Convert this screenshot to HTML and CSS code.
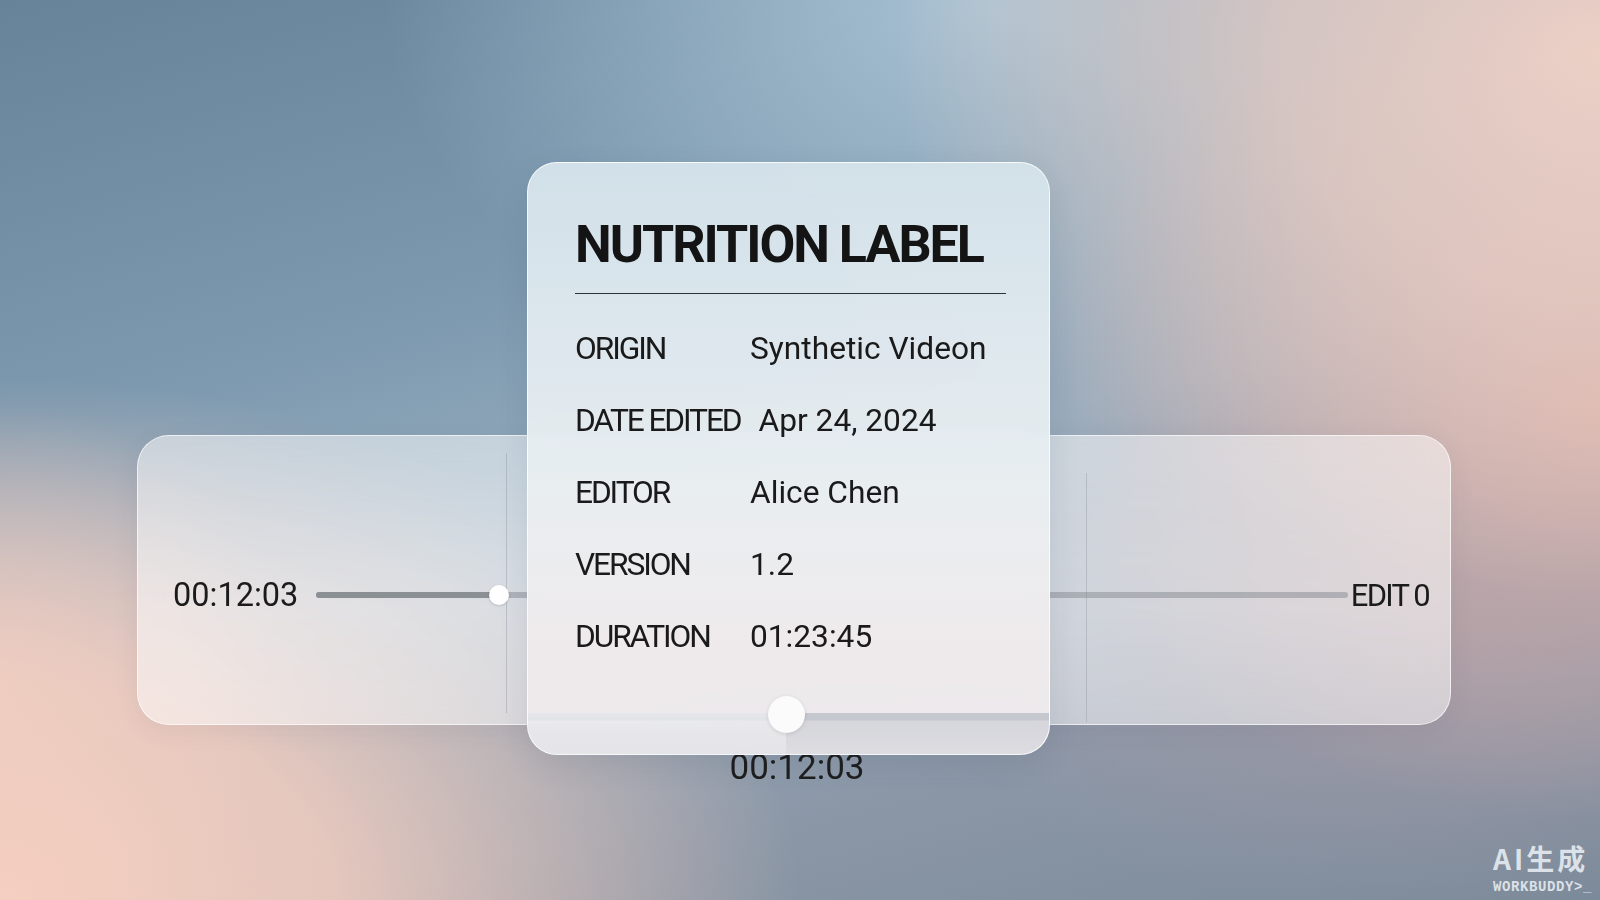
FILE: index.html
```html
<!DOCTYPE html>
<html lang="en">
<head>
<meta charset="utf-8">
<title>Nutrition Label</title>
<link rel="stylesheet" href="styles.css">
</head>
<body>
<main class="stage">
  <section class="timeline">
    <span class="v-line v-line-left"></span>
    <span class="v-line v-line-right"></span>
    <div class="timeline-row">
      <span class="time">00:12:03</span>
      <div class="track">
        <div class="track-fill" style="width:17.7%"></div>
        <div class="track-thumb" style="left:17.7%"></div>
      </div>
      <span class="edit">EDIT 0</span>
    </div>
  </section>

  <div class="label-wrap">
    <article class="label-card">
      <div class="label-body">
        <h1 class="label-title">NUTRITION LABEL</h1>
        <dl class="label-list">
          <div class="label-row"><dt>ORIGIN</dt><dd>Synthetic Videon</dd></div>
          <div class="label-row"><dt>DATE EDITED</dt><dd>Apr 24, 2024</dd></div>
          <div class="label-row"><dt>EDITOR</dt><dd>Alice Chen</dd></div>
          <div class="label-row"><dt>VERSION</dt><dd>1.2</dd></div>
          <div class="label-row"><dt>DURATION</dt><dd>01:23:45</dd></div>
        </dl>
      </div>
      <div class="scrub">
        <div class="scrub-played" style="width:258px"></div>
        <div class="scrub-thumb" style="left:240px"></div>
      </div>
    </article>
    <div class="caption">00:12:03</div>
  </div>

  <div class="watermark">
    <span class="wm-main">AI生成</span>
    <span class="wm-sub">WORKBUDDY&gt;_</span>
  </div>
</main>
</body>
</html>
```

FILE: styles.css
```css
* { box-sizing: border-box; }

html, body {
  margin: 0;
  padding: 0;
  width: 1600px;
  height: 900px;
  overflow: hidden;
}

body {
  font-family: Roboto, "Noto Sans", "Liberation Sans", sans-serif;
  color: #1a1a1a;
  background:
    radial-gradient(ellipse 50% 58% at 0% 100%, rgba(245,207,192,1) 0%, rgba(243,206,192,0.85) 42%, rgba(243,206,192,0) 100%),
    radial-gradient(ellipse 18% 30% at 0% 75%, rgba(238,204,194,0.7) 0%, rgba(238,204,194,0) 100%),
    radial-gradient(ellipse 44% 60% at 100% 6%, rgba(236,208,198,1) 0%, rgba(234,205,195,0.75) 45%, rgba(234,205,195,0) 100%),
    radial-gradient(ellipse 36% 46% at 100% 45%, rgba(218,176,168,0.95) 0%, rgba(214,176,170,0.5) 50%, rgba(214,176,170,0) 100%),
    radial-gradient(ellipse 30% 30% at 88% 72%, rgba(168,154,166,0.7) 0%, rgba(168,154,166,0) 100%),
    radial-gradient(ellipse 38% 44% at 62% 0%, rgba(172,198,215,0.95) 0%, rgba(172,198,215,0) 100%),
    linear-gradient(165deg, #66839a 0%, #7d99af 32%, #97adbf 52%, #8b97a7 78%, #7b8a9a 100%);
}

.stage {
  position: relative;
  width: 1600px;
  height: 900px;
  display: flex;
  align-items: flex-start;
  padding: 435px 0 0 137px;
}

/* ---------- timeline panel ---------- */
.timeline {
  position: relative;
  width: 1314px;
  height: 290px;
  border-radius: 32px;
  background: linear-gradient(180deg, rgba(255,255,255,0.5) 0%, rgba(255,255,255,0.56) 60%, rgba(255,255,255,0.5) 100%);
  border: 1.5px solid rgba(255,255,255,0.65);
  box-shadow: 0 6px 24px rgba(60,70,90,0.08);
  backdrop-filter: blur(18px);
}

.v-line {
  position: absolute;
  width: 1px;
  background: rgba(150,156,168,0.45);
}
.v-line-left { left: 368px; top: 17px; bottom: 11px; }
.v-line-right { left: 948px; top: 37px; bottom: 2px; }

.timeline-row {
  display: flex;
  align-items: center;
  height: 100%;
  padding: 30px 21px 0 35px;
}

.time {
  font-size: 32.5px;
  color: #1b1b1b;
  margin-right: 18px;
}

.track {
  position: relative;
  flex: 1;
  height: 6px;
  border-radius: 3px;
  background: rgba(140,144,152,0.55);
}
.track-fill {
  height: 100%;
  border-radius: 3px;
  background: #8b9095;
}
.track-thumb {
  position: absolute;
  top: 50%;
  width: 20px;
  height: 20px;
  margin: -10px 0 0 -10px;
  border-radius: 50%;
  background: #ffffff;
  box-shadow: 0 1px 3px rgba(0,0,0,0.15);
}

.edit {
  font-size: 31px;
  letter-spacing: -1.8px;
  color: #1b1b1b;
  margin-left: 3px;
}

/* ---------- label card ---------- */
.label-wrap {
  position: absolute;
  left: 527px;
  top: 162px;
  width: 523px;
  display: flex;
  flex-direction: column;
  align-items: center;
}

.label-card {
  width: 523px;
  height: 593px;
  display: flex;
  flex-direction: column;
  border-radius: 30px;
  overflow: hidden;
  background: linear-gradient(180deg, rgba(212,226,234,0.97) 0%, rgba(222,232,238,0.97) 25%, rgba(233,238,241,0.97) 55%, rgba(239,235,237,0.97) 80%, rgba(238,234,236,0.97) 100%);
  border: 1.5px solid rgba(255,255,255,0.75);
  box-shadow: 0 10px 30px rgba(40,50,70,0.10);
  backdrop-filter: blur(24px);
}

.label-body {
  padding: 51px 43px 0 47px;
}

.label-title {
  margin: 0;
  font-size: 52px;
  line-height: 61px;
  font-weight: 700;
  letter-spacing: -2px;
  color: #141414;
  padding-bottom: 18px;
  border-bottom: 1.5px solid #2d3236;
}

.label-list {
  margin: 18.5px 0 0;
}

.label-row {
  display: flex;
  height: 72px;
  line-height: 72px;
  font-size: 31.7px;
}

.label-row dt {
  min-width: 157px;
  margin-right: 18px;
  letter-spacing: -2.1px;
  color: #1a1a1a;
}

.label-row dd {
  margin: 0;
  color: #1a1a1a;
}

.scrub {
  position: relative;
  margin-top: auto;
  height: 41px;
  background: linear-gradient(180deg, rgba(160,168,182,0.5) 0px, rgba(160,168,182,0.5) 7px, rgba(176,182,194,0.38) 8px, rgba(190,195,204,0.3) 100%);
}
.scrub-played {
  height: 100%;
  background: linear-gradient(180deg, rgba(255,255,255,0.55) 0%, rgba(255,255,255,0.2) 100%);
}
.scrub-thumb {
  position: absolute;
  top: -17px;
  width: 37px;
  height: 37px;
  border-radius: 50%;
  background: #fbfbfb;
  box-shadow: 0 1px 4px rgba(0,0,0,0.12);
}

.caption {
  margin: -8px 0 0 17px;
  font-size: 35px;
  color: #1e1e1e;
}

/* ---------- watermark ---------- */
.watermark {
  position: absolute;
  right: 8px;
  bottom: 6px;
  display: flex;
  flex-direction: column;
  align-items: flex-start;
  color: rgba(232,238,243,0.88);
}
.wm-main {
  display: block;
  font-family: "Noto Sans CJK SC", sans-serif;
  font-weight: 700;
  font-size: 28px;
  line-height: 28px;
  letter-spacing: 3px;
}
.wm-sub {
  display: block;
  margin-top: 8px;
  font-family: "Liberation Mono", monospace;
  font-weight: 700;
  font-size: 14px;
  line-height: 14px;
  letter-spacing: 0.6px;
}
```
